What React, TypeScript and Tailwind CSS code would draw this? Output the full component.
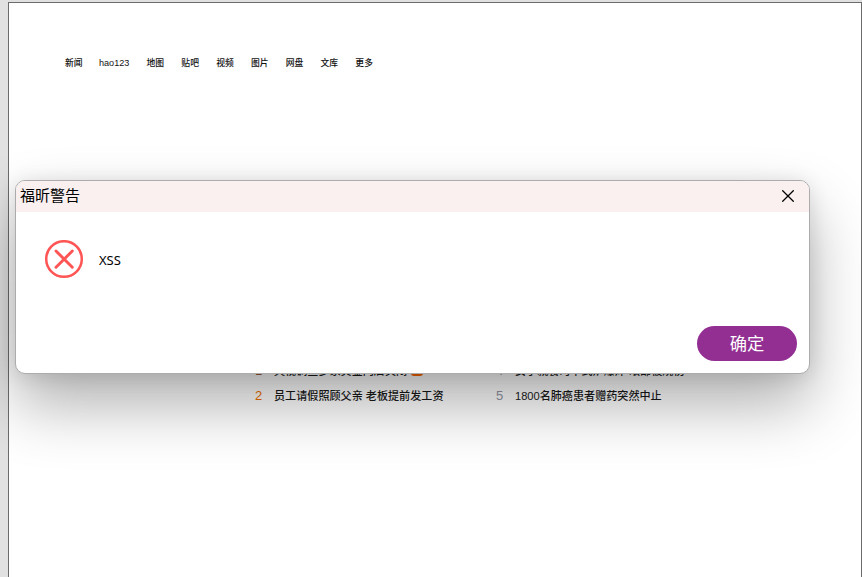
const links = ['新闻', 'hao123', '地图', '贴吧', '视频', '图片', '网盘', '文库', '更多'];

type Topic = { rank: number; title: string; color: string; hot?: boolean };

const columns: Topic[][] = [
  [
    { rank: 1, title: '央视调查多家黄金门店关闭', color: 'text-[#a0603c]', hot: true },
    { rank: 2, title: '员工请假照顾父亲 老板提前发工资', color: 'text-[#f07000]' },
  ],
  [
    { rank: 4, title: '女子就餐时卡式炉爆炸 眼部被烧伤', color: 'text-[#9195a3]' },
    { rank: 5, title: '1800名肺癌患者赠药突然中止', color: 'text-[#9195a3]' },
  ],
];

function DocumentPage() {
  return (
    <div className="ml-2 mt-[2px] h-[575px] w-[854px] border-x border-t border-[#6b6b6b] bg-white">
      <nav className="flex pl-14 pt-[53px] text-[8.8px] leading-[14px] text-[#111]">
        {links.map((l) => (
          <span
            key={l}
            className={`mr-[17.2px] whitespace-nowrap font-medium ${l === 'hao123' ? '-ml-[0.8px] text-[9.1px]' : ''}`}
          >
            {l}
          </span>
        ))}
      </nav>
      <div className="mt-[288px] flex pl-[246px]">
        {columns.map((items, i) => (
          <ul key={i} className="w-[241px]">
            {items.map((t) => (
              <li key={t.rank} className="flex h-[25px] items-center whitespace-nowrap text-[11.1px] leading-[25px] text-[#1a1a1a]">
                <span className={`w-[19px] text-[13px] ${t.color}`}>{t.rank}</span>
                <span className="pt-[2px] font-medium leading-[23px]">{t.title}</span>
                {t.hot && <span className="mb-[2px] ml-1 flex h-3 w-3 items-center justify-center rounded-[3px] bg-[#ff6600] text-[8px] text-white">热</span>}
              </li>
            ))}
          </ul>
        ))}
      </div>
    </div>
  );
}

function AlertDialog() {
  return (
    <section
      role="alertdialog"
      className="absolute left-[15px] top-[180px] flex h-[194px] w-[795px] flex-col overflow-hidden rounded-[10px] border border-[#acacac] bg-white font-['Noto_Sans','Noto_Sans_CJK_SC',sans-serif] shadow-[0_31px_62px_rgba(0,0,0,0.31),0_2px_20px_rgba(0,0,0,0.11)]"
    >
      <header className="flex h-[31px] items-center justify-between bg-[#f9f0ef] pb-px pl-1 pr-[15px]">
        <h1 className="pb-[2px] text-[15px] leading-[26px] text-black">福昕警告</h1>
        <button aria-label="close">
          <svg className="h-3 w-3" viewBox="0 0 12 12" fill="none" stroke="#000" strokeWidth="1.25">
            <path d="M.3.3l11.4 11.4M11.7.3L.3 11.7" />
          </svg>
        </button>
      </header>
      <div className="flex items-center pl-7 pt-7">
        <svg className="h-10 w-10" viewBox="0 0 40 40" fill="none" stroke="#ff5555" strokeLinecap="round">
          <circle cx="20" cy="19" r="17.8" strokeWidth="2.5" />
          <path d="M12 11l16.3 16.3M28.3 11L12 27.3" strokeWidth="2.9" />
        </svg>
        <p className="ml-[15px] text-[13px] leading-4 text-black">XSS</p>
      </div>
      <footer className="mt-auto flex justify-end pb-3 pr-3">
        <button className="h-[35px] w-[100px] rounded-full bg-[#932f92] text-[17.3px] leading-[34px] text-white">确定</button>
      </footer>
    </section>
  );
}

export default function App() {
  return (
    <main className="relative flex h-[577px] w-[862px] overflow-hidden bg-[#e1e1e1] font-['Liberation_Sans','Noto_Sans_CJK_SC',sans-serif]">
      <DocumentPage />
      <AlertDialog />
    </main>
  );
}
